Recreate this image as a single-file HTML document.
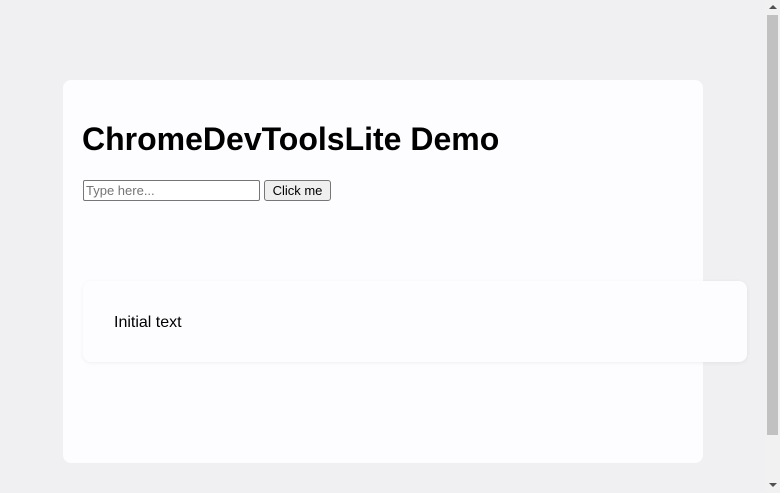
<!DOCTYPE html>
<html><head><style>
body{margin:0;width:780px;height:493px;background:#f0f0f2;font-family:"Liberation Sans",sans-serif;overflow:hidden;position:relative}
.card{position:absolute;left:63px;top:80px;width:640px;height:383px;background:#fdfdff;border-radius:8px}
h1{position:absolute;left:82px;top:121px;margin:0;font-size:32px;font-weight:bold;line-height:37px;color:#000}
input{position:absolute;left:83px;top:180px;width:177px;height:21px;border:1px solid #767676;border-radius:2px;padding:0 2px;font:13px "Liberation Sans",sans-serif;box-sizing:border-box;background:#fff;margin:0}
input::placeholder{color:#757575}
button{position:absolute;left:264px;top:180px;width:67px;height:21px;border:1px solid #767676;border-radius:3px;background:#efefef;font:13px "Liberation Sans",sans-serif;padding:0;color:#000;margin:0}
.box{position:absolute;left:83px;top:281px;width:664px;height:81px;background:#fdfdff;border-radius:8px;box-shadow:0 1px 4px rgba(0,0,0,.06)}
.box span{position:absolute;left:31px;top:33px;font-size:16px;color:#000}
.sb{position:absolute;left:765px;top:0;width:15px;height:493px;background:#f1f1f1}
.th{position:absolute;left:767px;top:15px;width:11px;height:420px;background:#c1c1c1}
.up,.dn{position:absolute;left:769px;width:0;height:0;border-left:4px solid transparent;border-right:4px solid transparent}
.up{top:5px;border-bottom:4px solid #505050}
.dn{top:483px;border-top:4px solid #505050}
</style></head><body>
<div class="card"></div>
<h1>ChromeDevToolsLite Demo</h1>
<input placeholder="Type here...">
<button>Click me</button>
<div class="box"><span>Initial text</span></div>
<div class="sb"></div><div class="th"></div><div class="up"></div><div class="dn"></div>
</body></html>
